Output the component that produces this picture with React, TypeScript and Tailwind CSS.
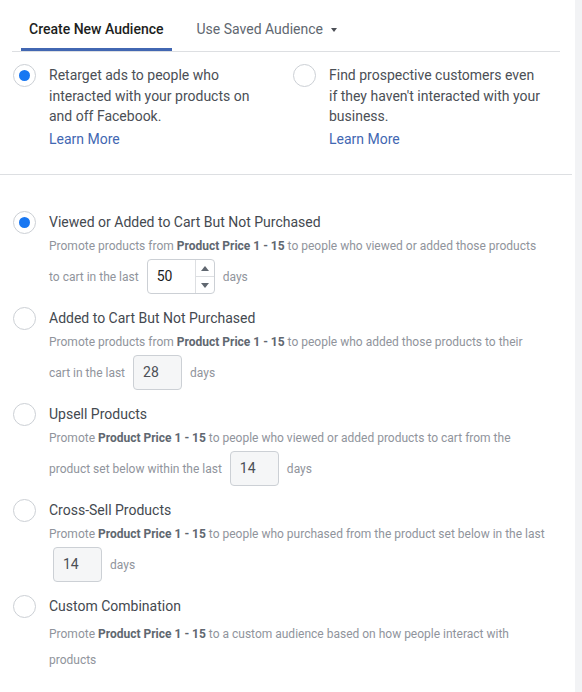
import React from "react";

const Radio = ({ checked = false }: { checked?: boolean }) => (
  <div className="w-[23px] h-[23px] shrink-0 rounded-full border border-[#ccd0d5] bg-white flex items-center justify-center">
    {checked && <div className="w-[11px] h-[11px] rounded-full bg-[#1877f2]" />}
  </div>
);

const Bold = ({ children }: { children: React.ReactNode }) => (
  <span className="font-bold text-[#606770]">{children}</span>
);

const DisabledBox = ({ value }: { value: string }) => (
  <div className="w-[49px] h-[35px] rounded-[4px] border border-[#ccd0d5] bg-[#f5f6f7] pl-[9px] flex items-center text-[14px] text-[#4b4f56]">
    {value}
  </div>
);

const SpinnerBox = ({ value }: { value: string }) => (
  <div className="w-[68px] h-[35px] rounded-[4px] border border-[#ccd0d5] bg-white flex">
    <div className="flex-1 pl-[9px] flex items-center text-[14px] text-[#1c1e21]">{value}</div>
    <div className="w-[19px] border-l border-[#dddfe2] flex flex-col">
      <div className="flex-1 flex items-center justify-center border-b border-[#dddfe2]">
        <div className="w-0 h-0 border-l-[4px] border-r-[4px] border-b-[5px] border-l-transparent border-r-transparent border-b-[#606770]" />
      </div>
      <div className="flex-1 flex items-center justify-center">
        <div className="w-0 h-0 border-l-[4px] border-r-[4px] border-t-[5px] border-l-transparent border-r-transparent border-t-[#606770]" />
      </div>
    </div>
  </div>
);

const Option = ({
  checked,
  title,
  children,
}: {
  checked?: boolean;
  title: string;
  children: React.ReactNode;
}) => (
  <div className="flex pl-[13px] mb-[13px]">
    <Radio checked={checked} />
    <div className="ml-[13px] flex-1">
      <div className="text-[14px] leading-[22px] text-[#444950]">{title}</div>
      {children}
    </div>
  </div>
);

const Line = ({ children }: { children: React.ReactNode }) => (
  <div className="text-[12px] leading-[26px] text-[#90949c] whitespace-nowrap">{children}</div>
);

const Row = ({ children, className = "" }: { children: React.ReactNode; className?: string }) => (
  <div className={`h-[35px] flex items-center gap-2 text-[12px] text-[#90949c] whitespace-nowrap ${className}`}>
    {children}
  </div>
);

export default function App() {
  return (
    <div className="flex w-[582px] h-[692px] bg-white font-[Roboto] overflow-hidden">
      <div className="w-[575px]">
        {/* TABS */}
        <div className="ml-3 w-[548px] pt-[11px] flex border-b border-[#dddfe2]">
          <div className="ml-[9px] h-[40px] px-2 flex items-center border-b-[3px] border-[#4267b2] text-[14px] font-medium text-[#1c1e21]">
            Create New Audience
          </div>
          <div className="ml-[17px] h-[40px] px-2 flex items-center border-b-[3px] border-transparent text-[14px] text-[#606770]">
            Use Saved Audience
            <div className="ml-2 mt-[1px] w-0 h-0 border-l-[3.5px] border-r-[3.5px] border-t-[4px] border-l-transparent border-r-transparent border-t-[#4b4f56]" />
          </div>
        </div>

        {/* AUDIENCE TYPE */}
        <div className="w-[572px] pt-[12px] pb-[25px] pl-[13px] flex border-b border-[#dddfe2]">
          <div className="w-[280px] flex items-start">
            <Radio checked />
            <div className="ml-[13px] mt-[1px]">
              <div className="text-[14px] leading-[20.5px] text-[#4b4f56]">
                Retarget ads to people who
                <br />
                interacted with your products on
                <br />
                and off Facebook.
              </div>
              <div className="mt-[2.5px] text-[14px] leading-[20px] text-[#4267b2]">Learn More</div>
            </div>
          </div>
          <div className="w-[270px] flex items-start">
            <Radio />
            <div className="ml-[13px] mt-[1px]">
              <div className="text-[14px] leading-[20.5px] text-[#4b4f56]">
                Find prospective customers even
                <br />
                if they haven't interacted with your
                <br />
                business.
              </div>
              <div className="mt-[2.5px] text-[14px] leading-[20px] text-[#4267b2]">Learn More</div>
            </div>
          </div>
        </div>

        {/* OPTIONS */}
        <div className="pt-[36px]">
          <Option checked title="Viewed or Added to Cart But Not Purchased">
            <Line>
              Promote products from <Bold>Product Price 1 - 15</Bold> to people who viewed or added those products
            </Line>
            <Row>
              <span>to cart in the last</span>
              <SpinnerBox value="50" />
              <span>days</span>
            </Row>
          </Option>

          <Option title="Added to Cart But Not Purchased">
            <Line>
              Promote products from <Bold>Product Price 1 - 15</Bold> to people who added those products to their
            </Line>
            <Row>
              <span>cart in the last</span>
              <DisabledBox value="28" />
              <span>days</span>
            </Row>
          </Option>

          <Option title="Upsell Products">
            <Line>
              Promote <Bold>Product Price 1 - 15</Bold> to people who viewed or added products to cart from the
            </Line>
            <Row>
              <span>product set below within the last</span>
              <DisabledBox value="14" />
              <span>days</span>
            </Row>
          </Option>

          <Option title="Cross-Sell Products">
            <Line>
              Promote <Bold>Product Price 1 - 15</Bold> to people who purchased from the product set below in the last
            </Line>
            <Row className="pl-[4px]">
              <DisabledBox value="14" />
              <span>days</span>
            </Row>
          </Option>

          <Option title="Custom Combination">
            <div className="mt-[4px]">
              <Line>
                Promote <Bold>Product Price 1 - 15</Bold> to a custom audience based on how people interact with
              </Line>
              <Line>products</Line>
            </div>
          </Option>
        </div>
      </div>
      <div className="w-[7px] bg-[#f2f3f5]" />
    </div>
  );
}
